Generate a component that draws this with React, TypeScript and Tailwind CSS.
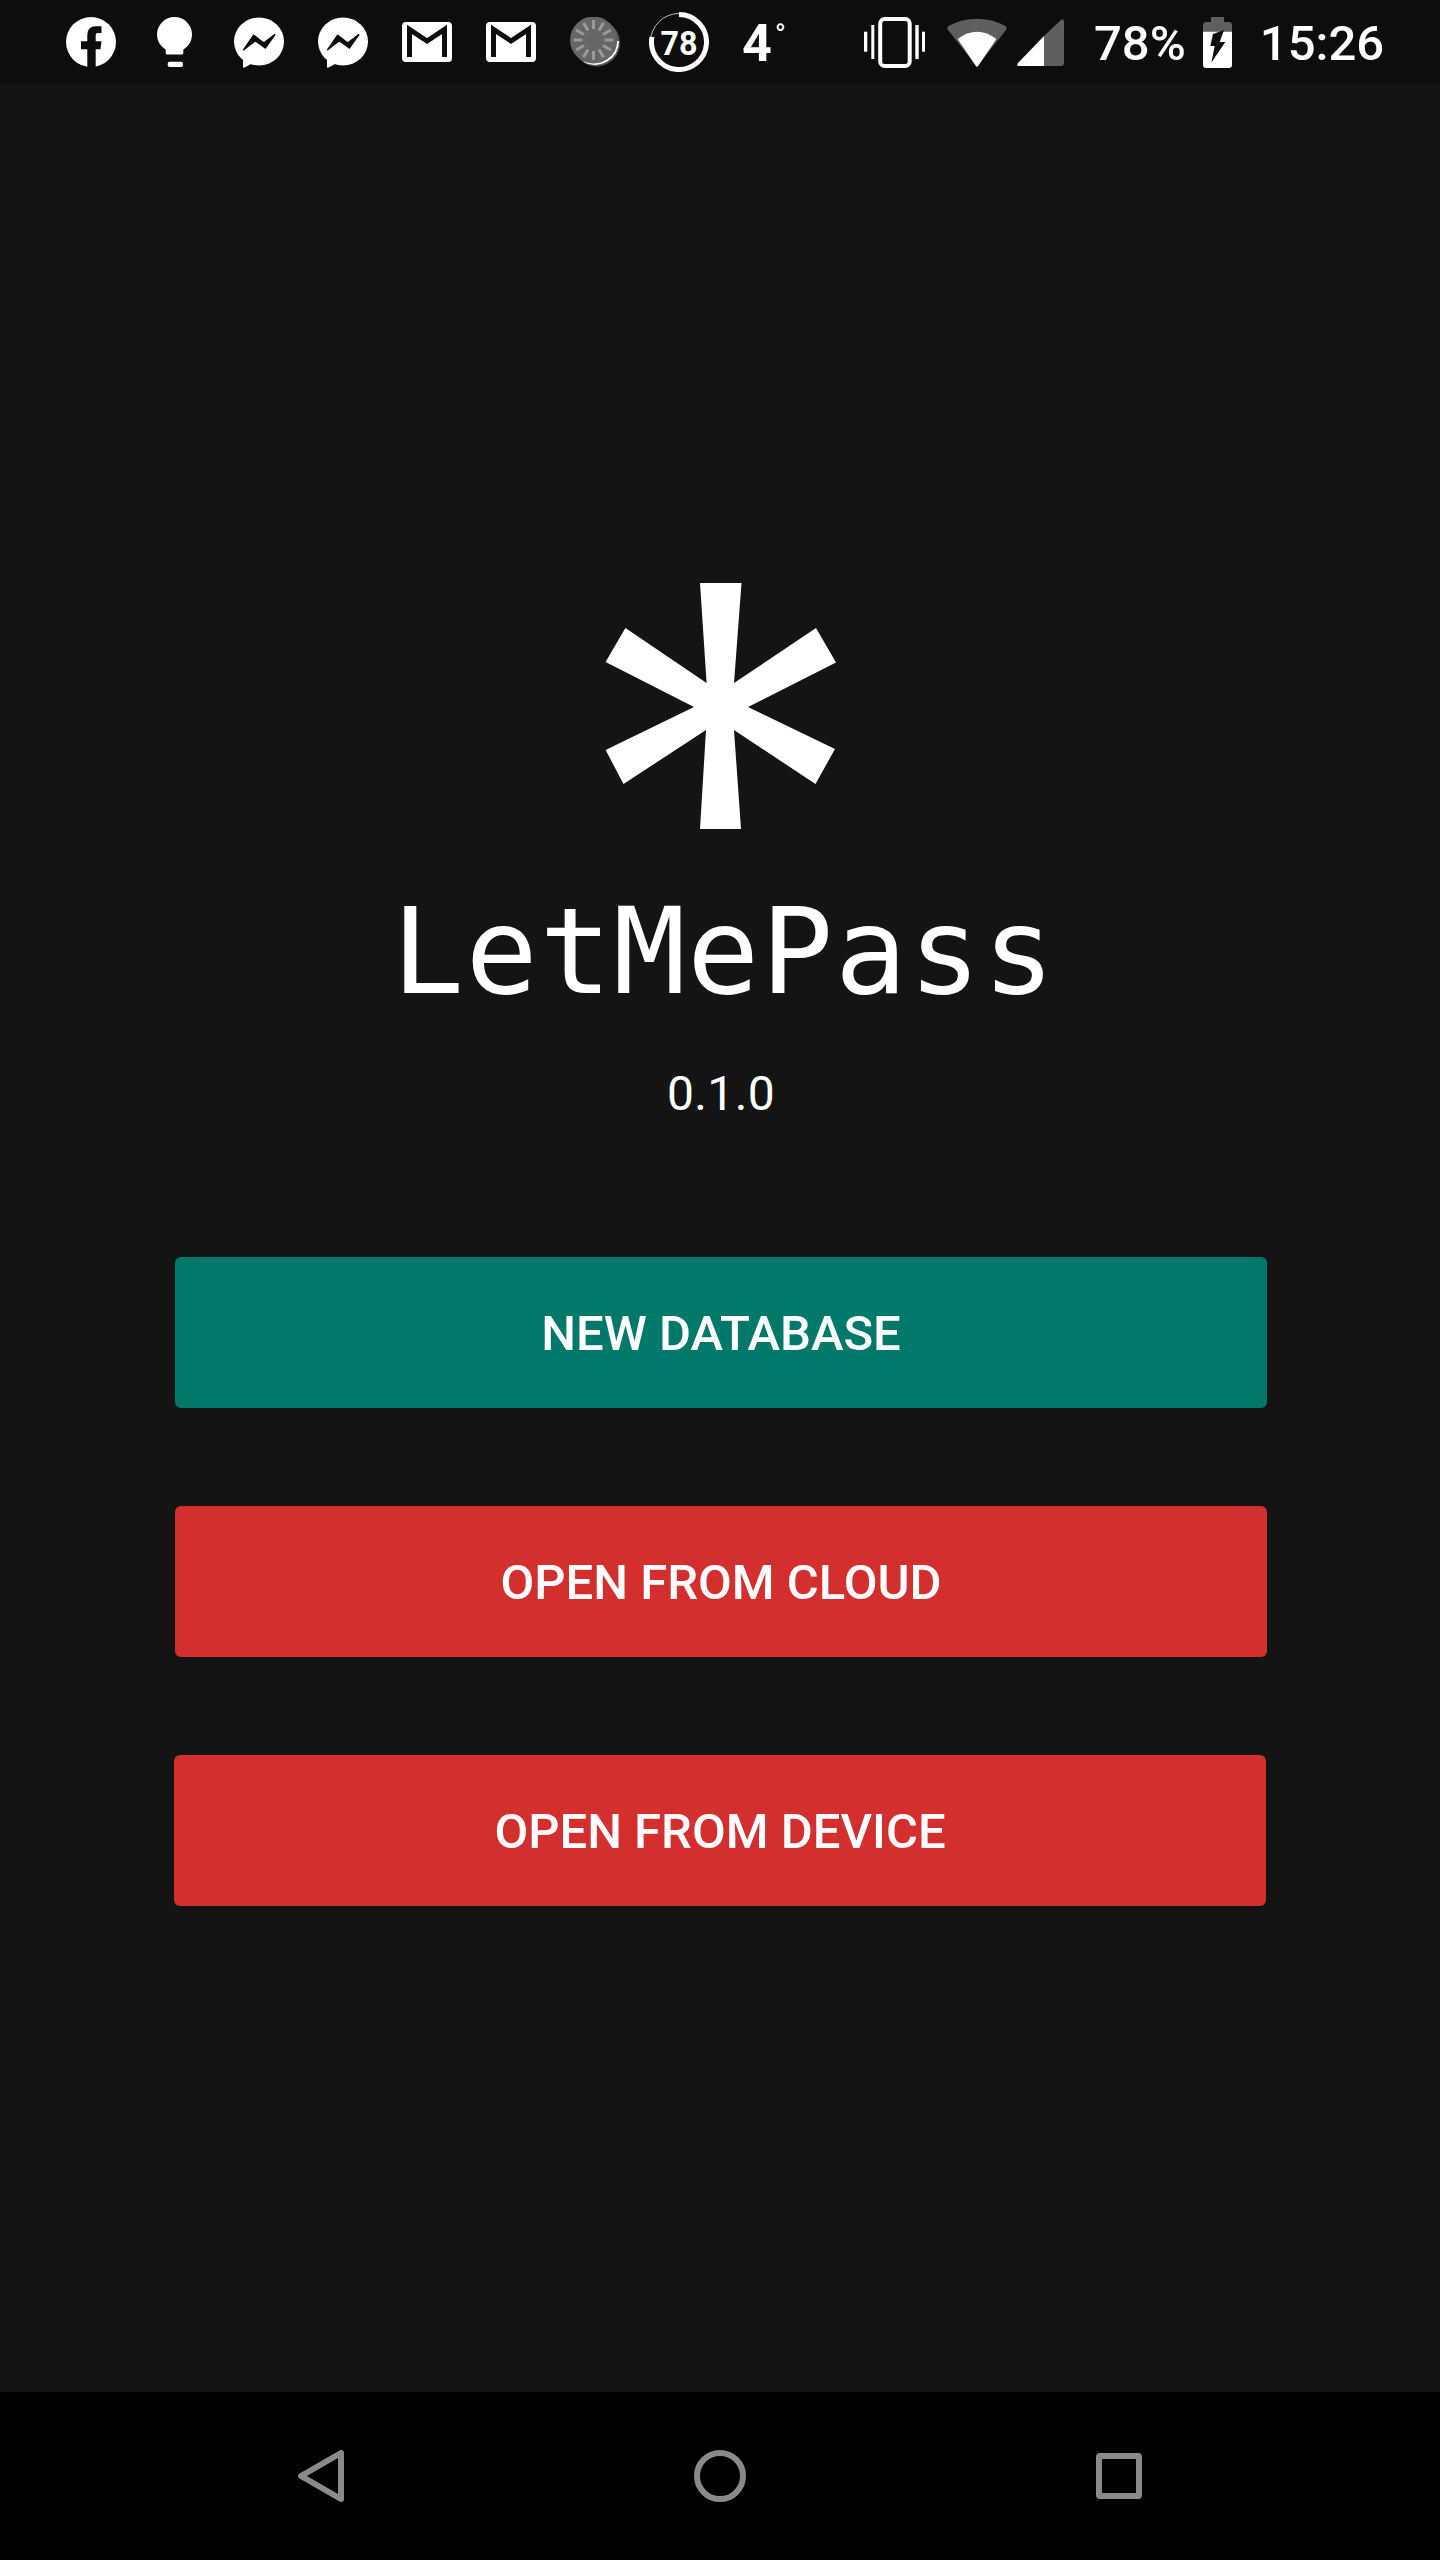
const BG = '#0d0d0d';

function FacebookIcon() {
  return (
    <svg width="50" height="50" viewBox="0 0 50 50" className="shrink-0">
      <circle cx="25" cy="25" r="25" fill="#fff" />
      <path fill={BG} d="M21.3 50V32.3H15V24.3H21.3V18Q21.3 9.3 30 9.3H35.5V16H31.5Q29.7 16 29.7 18V24.3H35.5L34.5 32.3H29.7V50Z" />
    </svg>
  );
}

function BulbIcon() {
  return (
    <svg width="35" height="50" viewBox="0 0 35 50" className="shrink-0">
      <circle cx="17.5" cy="17.5" r="17.5" fill="#fff" />
      <path fill="#fff" d="M8.7 28V36Q8.7 37.5 10.2 37.5H24.8Q26.3 37.5 26.3 36V28Z" />
      <rect x="10.7" y="44.7" width="15.3" height="5.3" rx="2" fill="#fff" />
    </svg>
  );
}

function MessengerIcon() {
  return (
    <svg width="50" height="51" viewBox="0 0 50 51" className="shrink-0">
      <ellipse cx="25" cy="24.5" rx="25" ry="24" fill="#fff" />
      <path fill="#fff" d="M9 38V50Q9 51 10.5 50.5L17 47Z" />
      <path fill={BG} stroke={BG} strokeWidth="1.5" strokeLinejoin="round" d="M9.7 32.7L19.7 18.3L29.7 26L40.7 17.7L31.3 31L21.3 23.7Z" />
    </svg>
  );
}

function GmailIcon() {
  return (
    <svg width="50" height="40" viewBox="0 0 50 40" className="shrink-0">
      <rect width="50" height="40" rx="4" fill="#fff" />
      <path fill="none" stroke={BG} strokeWidth="5" d="M7.5 35V7.5L25 19L42.5 7.5V35" />
    </svg>
  );
}

function SpinnerIcon() {
  const ticks = [0, 30, 60, 90, 120, 150, 180, 210, 240, 270, 300, 330];
  return (
    <svg width="50" height="50" viewBox="0 0 50 50" className="shrink-0">
      <circle cx="26.5" cy="26" r="23.5" fill="#555" />
      <path fill="none" stroke="#fff" strokeWidth="2" d="M48 24A23 23 0 0 1 14 44" />
      <circle cx="23.5" cy="23" r="23.5" fill="#666" />
      {ticks.map(a => (
        <rect key={a} x="22" y="3" width="3" height="9" fill="#999" transform={`rotate(${a} 23.5 23)`} />
      ))}
    </svg>
  );
}

function BatteryRing() {
  return (
    <svg width="60" height="60" viewBox="0 0 60 60" className="shrink-0">
      <circle cx="30" cy="30" r="28.5" fill="none" stroke="#bbb" strokeWidth="1" />
      <path fill="none" stroke="#fff" strokeWidth="5" d="M30 2.5A27.5 27.5 0 1 1 3 24.85" />
      <text x="30" y="43" textAnchor="middle" textLength={37} lengthAdjust="spacingAndGlyphs" fill="#fff" fontSize="34" fontWeight="700" className="font-['Roboto',sans-serif]">78</text>
    </svg>
  );
}

function VibrateIcon() {
  return (
    <svg width="61" height="51" viewBox="0 0 61 51" className="shrink-0">
      <rect x="16.2" y="2" width="29.5" height="47" rx="4.5" fill="none" stroke="#fff" strokeWidth="4" />
      <rect x="7.3" y="8" width="3" height="34" fill="#fff" />
      <rect x="0" y="14.7" width="3.3" height="20" fill="#fff" />
      <rect x="51.3" y="8" width="3.4" height="34" fill="#fff" />
      <rect x="58" y="14.7" width="3" height="20" fill="#fff" />
    </svg>
  );
}

function WifiIcon() {
  return (
    <svg width="60" height="49" viewBox="0 0 60 49" className="shrink-0">
      <path fill="#5f5f5f" d="M30 48.5L1 12Q-0.5 9.5 1.5 8Q15 .7 30 .7Q45 .7 58.5 8Q60.5 9.5 59 12Z" />
      <path fill="#fff" d="M28.7 47.8L10.7 21Q20 13.7 30 13.7Q40 13.7 49.3 21L31.3 47.8Q30 49.5 28.7 47.8Z" />
    </svg>
  );
}

function SignalIcon() {
  return (
    <svg width="47" height="47" viewBox="0 0 47 47" className="shrink-0">
      <path fill="#5f5f5f" d="M27 17L44 1Q47 -1 47 3V44Q47 47 44 47H27Z" />
      <path fill="#fff" d="M27 17V47H2Q-1 47 1 44Z" />
    </svg>
  );
}

function BatteryIcon() {
  return (
    <svg width="29" height="51" viewBox="0 0 29 51" className="shrink-0">
      <path fill="#5f5f5f" d="M8 0H21V5H26Q29 5 29 8V15H0V8Q0 5 3 5H8Z" />
      <path fill="#fff" d="M0 14.7H29V48Q29 51 26 51H3Q0 51 0 48Z" />
      <path fill={BG} d="M10 17L21 13L16.7 25H22.3L8.3 45.7L11.7 29H7.3Z" />
    </svg>
  );
}

function StatusBar() {
  return (
    <div className="flex h-[84px] shrink-0 items-center bg-[#0d0d0d] pl-[66px] text-white">
      <FacebookIcon />
      <div className="ml-[41px] flex"><BulbIcon /></div>
      <div className="ml-[42px] flex"><MessengerIcon /></div>
      <div className="ml-[34px] flex"><MessengerIcon /></div>
      <div className="ml-[34px] flex"><GmailIcon /></div>
      <div className="ml-[34px] flex"><GmailIcon /></div>
      <div className="ml-[34px] flex"><SpinnerIcon /></div>
      <div className="ml-[29px] flex"><BatteryRing /></div>
      <span className="mt-[3px] ml-[33px] flex w-[122px] items-start text-[52px] leading-none font-bold">
        4<span className="mt-[2px] ml-[3px] text-[30px] leading-none font-normal">°</span>
      </span>
      <VibrateIcon />
      <div className="ml-[22px] flex"><WifiIcon /></div>
      <div className="ml-[10px] flex"><SignalIcon /></div>
      <span className="mt-[3px] ml-[30px] text-[49px] leading-none font-medium">78%</span>
      <div className="ml-[17px] flex"><BatteryIcon /></div>
      <span className="mt-[3px] ml-[28px] text-[49px] leading-none font-medium">15:26</span>
    </div>
  );
}

function Logo() {
  return (
    <svg width="232" height="246" viewBox="0 0 232 246" className="ml-[2px] shrink-0">
      <polygon
        fill="#fff"
        points="95,0 136.5,0 129,100 211,45 231,79.5 143,124 230,166 210.5,201 129,147 136,246 95,246 101,147 18.5,201 0.6,167 89,124 0.6,79 20.4,45 101.6,100"
      />
    </svg>
  );
}

function ActionButton({ label, color }: { label: string; color: string }) {
  return (
    <button className={`h-[151px] w-[1092px] rounded-[6px] pt-[3px] text-[49px] font-medium text-white ${color}`}>
      {label}
    </button>
  );
}

export default function App() {
  return (
    <div className="flex h-[2560px] w-[1440px] flex-col bg-[#141414] font-['Roboto',sans-serif]">
      <StatusBar />

      <main className="flex flex-1 flex-col items-center pt-[499px]">
        <Logo />
        <h1 className="mt-[53px] ml-[8px] font-['DejaVu_Sans_Mono',monospace] text-[120px] leading-[140px] font-normal tracking-[1.6px] text-white">
          LetMePass
        </h1>
        <p className="mt-[44px] ml-[2px] text-[48px] leading-[56px] tracking-[0.4px] text-white">0.1.0</p>

        <div className="mt-[135px] ml-[2px] flex flex-col gap-[98px]">
          <ActionButton label="NEW DATABASE" color="bg-[#00796b]" />
          <ActionButton label="OPEN FROM CLOUD" color="bg-[#d32f2f]" />
          <ActionButton label="OPEN FROM DEVICE" color="-ml-px bg-[#d32f2f]" />
        </div>
      </main>

      <nav className="flex h-[168px] shrink-0 items-center justify-center gap-[350px] bg-black">
        <svg width="46" height="52" viewBox="0 0 46 52">
          <path fill="none" stroke="#8a8a8a" strokeWidth="6" strokeLinejoin="round" d="M43 3V49L3 26Z" />
        </svg>
        <svg width="52" height="52" viewBox="0 0 52 52">
          <circle cx="26" cy="26" r="23" fill="none" stroke="#8a8a8a" strokeWidth="6" />
        </svg>
        <svg width="46" height="46" viewBox="0 0 46 46">
          <rect x="3" y="3" width="40" height="40" rx="1" fill="none" stroke="#8a8a8a" strokeWidth="6" />
        </svg>
      </nav>
    </div>
  );
}
